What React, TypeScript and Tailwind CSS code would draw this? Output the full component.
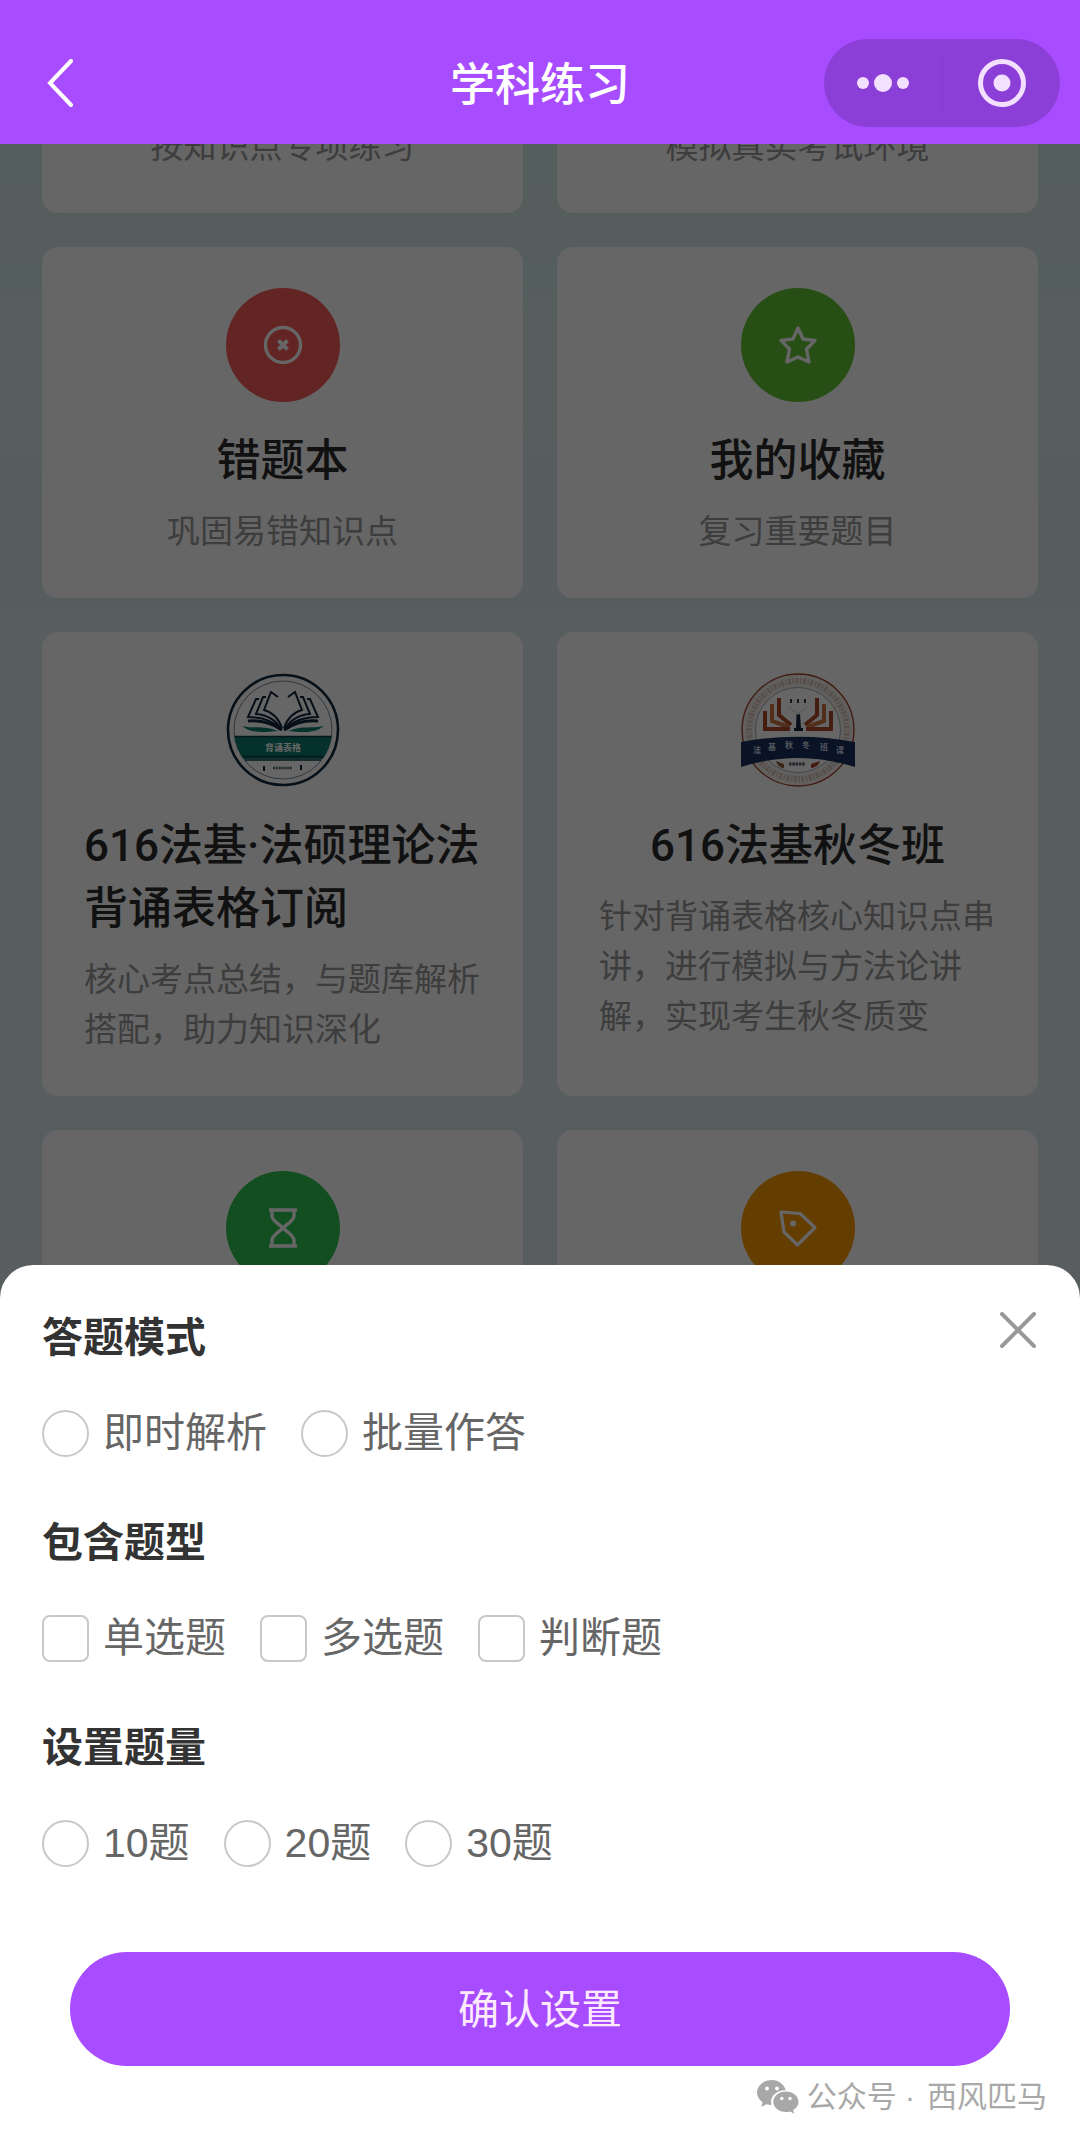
import React, { useState } from 'react';

interface CardItem {
  title: string;
  desc: string;
  icon: React.ReactNode;
}

interface OptionProps {
  type: 'radio' | 'checkbox';
  name: string;
  label: string;
  checked: boolean;
  onChange: () => void;
}

const MODES = ['即时解析', '批量作答'];
const TYPES = ['单选题', '多选题', '判断题'];
const COUNTS = ['10题', '20题', '30题'];

const WrongIcon = () => (
  <svg className="w-10 h-10" viewBox="0 0 40 40" fill="none" stroke="currentColor" strokeWidth="3.4">
    <circle cx="20" cy="20" r="17.5" />
    <path d="M15.5 15.5l9 9M24.5 15.5l-9 9" strokeWidth="4" />
  </svg>
);

const StarIcon = () => (
  <svg className="w-10 h-10" viewBox="0 0 40 40" fill="none" stroke="currentColor" strokeWidth="3.4" strokeLinejoin="round">
    <path d="M20 3l5 11 12 1.500-8.500 8.500 2.500 13L20 32 9 37l2.500-13L3 15.500 15 14z" />
  </svg>
);

const HourglassIcon = () => (
  <svg className="w-10 h-10" viewBox="0 0 40 40" fill="none" stroke="currentColor" strokeWidth="3.4">
    <path d="M6 2h28M6 38h28" />
    <path d="M9 2v6c0 4.500 8 9 11 12 3-3 11-7.500 11-12V2M9 38v-6c0-4.500 8-9 11-12 3 3 11 7.500 11 12v6" />
  </svg>
);

const TagIcon = () => (
  <svg className="w-10 h-10" viewBox="0 0 40 40" fill="none" stroke="currentColor" strokeWidth="3.2" strokeLinejoin="round">
    <path d="M3 4l19 1.500 15 14L19.500 37 6 24z" />
    <circle cx="15" cy="15.500" r="3" fill="currentColor" stroke="none" />
  </svg>
);

const TableLogo = () => (
  <svg className="w-[114px] h-[114px]" viewBox="0 0 114 114" fill="none">
    <circle cx="57" cy="57" r="55" fill="#fff" stroke="#0f2a3d" strokeWidth="2.6" />
    <circle cx="57" cy="57" r="49" stroke="#5b6b7c" strokeWidth="0.8" />
    <path d="M8.500 63h97a49 49 0 0 1-9 23h-79a49 49 0 0 1-9-23z" fill="#0c7a6c" />
    <path d="M8.500 63.500h97M17 83.500h80M19 87h76" stroke="#0f3a44" strokeWidth="1.4" />
    <g stroke="#10263a" strokeWidth="2">
      <path d="M52 24l-7-5-7 18c8 2 14 7 18 18" />
      <path d="M40 24h-3l-7 17c11 1 20 6 25 15" />
      <path d="M33 26h-3l-8 18c14 0 25 4 33 12" />
      <path d="M22 48c12-1 24 2 34 9" strokeWidth="3" />
      <path d="M62 24l7-5 7 18c-8 2-14 7-18 18" />
      <path d="M74 24h3l7 17c-11 1-20 6-25 15" />
      <path d="M81 26h3l8 18c-14 0-25 4-33 12" />
      <path d="M92 48c-12-1-24 2-34 9" strokeWidth="3" />
    </g>
    <path d="M16 53c12 3 20-1 36 5-14 1-26 3-36-5zM98 53c-12 3-20-1-36 5 14 1 26 3 36-5z" fill="#0c7a6c" />
    <text x="57" y="78" textAnchor="middle" fontSize="9" fontWeight="700" fill="#fff" className="font-['Noto_Sans_CJK_SC']">背诵表格</text>
    <path d="M47 95h19" stroke="#56616b" strokeWidth="2.5" strokeDasharray="2 0.8" />
    <path d="M38 93v5M75 92v5" stroke="#10263a" strokeWidth="2" />
  </svg>
);

const ClassLogo = () => (
  <svg className="w-[114px] h-[114px]" viewBox="0 0 114 114" fill="none">
    <circle cx="57" cy="57" r="56" fill="#f4efec" stroke="#a0442c" strokeWidth="1.4" />
    <circle cx="57" cy="57" r="49" stroke="#d6c6bb" strokeWidth="6" strokeDasharray="1.5 1.5 3 1.5" />
    <circle cx="57" cy="57" r="42.5" fill="#fff" stroke="#8b95a5" strokeWidth="0.8" />
    <g strokeWidth="4" stroke="#b04a2c">
      <path d="M38 25v17l12 10" />
      <path d="M31 31v17l17 6" stroke="#cf7744" />
      <path d="M24 38v18h25" />
      <path d="M76 25v17L64 52" />
      <path d="M83 31v17l-17 6" stroke="#cf7744" />
      <path d="M90 38v18H65" />
    </g>
    <path d="M55.500 41h3.500l1 14h2v3h-9v-3h2z" fill="#14233f" />
    <path d="M48 34c2 4 8 4 9 8 1-4 7-4 9-8" stroke="#c9c9d0" />
    <path d="M50 26v4M57 26v4M64 26v4" stroke="#3c4258" strokeWidth="2" />
    <path d="M0 69c38-7 76-7 114 0v25c-38-12-76-12-114 0z" fill="#17305c" />
    <g fill="#cfd8ea" fontSize="8" fontWeight="700" textAnchor="middle" className="font-['Noto_Sans_CJK_SC']">
      <text x="16" y="80">法</text>
      <text x="31" y="77">基</text>
      <text x="48" y="75">秋</text>
      <text x="65" y="75">冬</text>
      <text x="83" y="77">班</text>
      <text x="99" y="80">课</text>
    </g>
    <path d="M35 88l8 3v4c-4 0-7-3-8-7z" fill="#8a6230" />
    <path d="M79 88l-9 3v4c4 0 8-3 9-7z" fill="#b0402c" />
    <path d="M48 91h16" stroke="#4f5869" strokeWidth="3" strokeDasharray="2.5 0.8" />
  </svg>
);

const Badge: React.FC<{ className: string; children: React.ReactNode }> = ({ className, children }) => (
  <span className={`flex w-[114px] h-[114px] items-center justify-center rounded-full text-white ${className}`}>
    {children}
  </span>
);

const CARDS: CardItem[] = [
  { title: '错题本', desc: '巩固易错知识点', icon: <Badge className="bg-[#f85c5a]"><WrongIcon /></Badge> },
  { title: '我的收藏', desc: '复习重要题目', icon: <Badge className="bg-[#63c432]"><StarIcon /></Badge> },
  { title: '616法基·法硕理论法背诵表格订阅', desc: '核心考点总结，与题库解析搭配，助力知识深化', icon: <TableLogo /> },
  { title: '616法基秋冬班', desc: '针对背诵表格核心知识点串讲，进行模拟与方法论讲解，实现考生秋冬质变', icon: <ClassLogo /> },
];

const Card: React.FC<CardItem> = ({ title, desc, icon }) => (
  <article className="flex flex-col items-center rounded-2xl bg-white px-[42px] py-[41px]">
    {icon}
    <h2 className="mt-7 font-['Roboto','Noto_Sans_CJK_SC',sans-serif] text-[44px] leading-[63px] font-medium text-[#2b2b2b]">
      {title}
    </h2>
    <p className="mt-[14px] text-[33px] leading-[50px] text-[#999]">{desc}</p>
  </article>
);

const Option: React.FC<OptionProps> = ({ type, name, label, checked, onChange }) => (
  <label className="flex items-center gap-[14px] text-[41px] leading-[58px] text-[#666]">
    <input
      type={type}
      name={name}
      checked={checked}
      onChange={onChange}
      className={`w-[47px] h-[47px] appearance-none border-2 border-[#c8c8c8] bg-white checked:border-[#a84cff] checked:bg-[#a84cff] ${
        type === 'radio' ? 'rounded-full' : 'rounded-lg'
      }`}
    />
    {label}
  </label>
);

const Group: React.FC<{ title: string; children: React.ReactNode }> = ({ title, children }) => (
  <fieldset>
    <legend className="text-[41px] leading-[60px] font-bold text-[#333]">{title}</legend>
    <div className="mt-9 flex flex-wrap gap-[34px]">{children}</div>
  </fieldset>
);

const App: React.FC = () => {
  const [mode, setMode] = useState('');
  const [types, setTypes] = useState<string[]>([]);
  const [count, setCount] = useState('');

  const toggleType = (t: string) => {
    setTypes(prev => (prev.includes(t) ? prev.filter(x => x !== t) : [...prev, t]));
  };

  return (
    <div className="flex h-screen flex-col font-['Liberation_Sans','Noto_Sans_CJK_SC',sans-serif]">

      {/* Nav bar */}
      <header className="grid grid-cols-[1fr_auto_1fr] items-center bg-[#a84cff] pt-[39px] pb-[17px] px-5">
        <button aria-label="返回" className="ml-5 justify-self-start text-white">
          <svg className="w-9 h-12" viewBox="0 0 36 48" fill="none" stroke="currentColor" strokeWidth="4" strokeLinecap="round">
            <path d="M31 2L10 24l21 22" />
          </svg>
        </button>
        <h1 className="pt-1.5 text-[45px] leading-[64px] font-medium text-white">学科练习</h1>
        <div className="flex h-[88px] w-[236px] items-center justify-self-end rounded-full bg-[#8b3fd6] text-[#f3dfff]">
          <button aria-label="更多" className="flex flex-1 justify-center">
            <svg className="w-14 h-5" viewBox="0 0 56 20" fill="currentColor">
              <circle cx="8" cy="10" r="6" />
              <circle cx="28" cy="10" r="9" />
              <circle cx="48" cy="10" r="6" />
            </svg>
          </button>
          <span className="h-14 w-0.5 bg-[#883dd1]" />
          <button aria-label="关闭小程序" className="flex flex-1 justify-center">
            <svg className="w-12 h-12" viewBox="0 0 48 48" fill="none" stroke="currentColor" strokeWidth="5">
              <circle cx="24" cy="24" r="21.5" />
              <circle cx="24" cy="24" r="8.5" fill="currentColor" stroke="none" />
            </svg>
          </button>
        </div>
      </header>

      <div className="relative flex-1 overflow-hidden bg-linear-to-b from-[#d3ece8] via-[#dbe8ee] via-25% to-[#e1e9f5]">
        <main className="grid grid-cols-2 gap-[34px] px-[42px]">
          {/* Top row is scrolled under the nav bar */}
          {['按知识点专项练习', '模拟真实考试环境'].map(text => (
            <article key={text} className="flex h-[69px] items-end justify-center overflow-hidden rounded-b-2xl bg-white pb-[41px]">
              <p className="text-[33px] leading-[50px] text-[#999]">{text}</p>
            </article>
          ))}
          {CARDS.map(card => (
            <Card key={card.title} {...card} />
          ))}
          <article className="flex h-[351px] justify-center rounded-2xl bg-white px-[42px] py-[41px]">
            <Badge className="bg-[#30c452]"><HourglassIcon /></Badge>
          </article>
          <article className="flex h-[351px] justify-center rounded-2xl bg-white px-[42px] py-[41px]">
            <Badge className="bg-[#fb9a00]"><TagIcon /></Badge>
          </article>
        </main>

        {/* Settings sheet */}
        <div className="absolute inset-0 flex flex-col justify-end bg-black/60">
          <section role="dialog" aria-label="答题设置" className="relative rounded-t-[33px] bg-white pt-[43px] pb-[22px]">
            <button aria-label="关闭" className="absolute top-[42px] right-[42px] flex h-[46px] w-10 items-center justify-center text-[#999]">
              <svg className="w-9 h-9" viewBox="0 0 36 36" fill="none" stroke="currentColor" strokeWidth="4" strokeLinecap="round">
                <path d="M2 2l32 32M34 2L2 34" />
              </svg>
            </button>
            <form className="px-[42px]" onSubmit={e => e.preventDefault()}>
              <div className="flex flex-col gap-[51px]">
                <Group title="答题模式">
                  {MODES.map(m => (
                    <Option key={m} type="radio" name="mode" label={m} checked={mode === m} onChange={() => setMode(m)} />
                  ))}
                </Group>
                <Group title="包含题型">
                  {TYPES.map(t => (
                    <Option key={t} type="checkbox" name="types" label={t} checked={types.includes(t)} onChange={() => toggleType(t)} />
                  ))}
                </Group>
                <Group title="设置题量">
                  {COUNTS.map(c => (
                    <Option key={c} type="radio" name="count" label={c} checked={count === c} onChange={() => setCount(c)} />
                  ))}
                </Group>
              </div>
              <div className="mt-20 px-7">
                <button type="submit" className="h-[114px] w-full rounded-full bg-[#a84cff] pt-1 text-[41px] text-[#fdeaff]">
                  确认设置
                </button>
              </div>
            </form>
            <footer className="mt-[11px] flex items-center justify-end gap-2 pr-[33px] text-[30px] leading-[40px] text-[#a8a8a8]">
              <svg className="w-[42px] h-[34px]" viewBox="0 0 42 34" fill="currentColor">
                <path d="M15 0C6.700 0 0 5.600 0 12.600c0 4 2.200 7.500 5.600 9.800L4.200 27l5.200-2.700c1.700.5 3.400.8 5.200.8a12 12 0 0 1-.5-3.200c0-6.400 6-11.600 13.500-11.600h1.200C27.300 4.300 21.700 0 15 0z" />
                <path d="M41.500 21.700c0-5.600-5.700-10.200-12.600-10.200s-12.600 4.600-12.600 10.200S22 32 28.900 32c1.500 0 2.900-.2 4.200-.6l4.100 2.300-1.100-3.700c3.300-1.900 5.400-4.900 5.400-8.300z" />
                <g fill="#fff">
                  <circle cx="10" cy="8.500" r="1.900" />
                  <circle cx="20" cy="8.500" r="1.900" />
                  <circle cx="24.800" cy="18.500" r="1.700" />
                  <circle cx="33" cy="18.500" r="1.700" />
                </g>
              </svg>
              <span>公众号 ·</span>
              <span className="ml-1">西风匹马</span>
            </footer>
          </section>
        </div>
      </div>
    </div>
  );
};

export default App;
